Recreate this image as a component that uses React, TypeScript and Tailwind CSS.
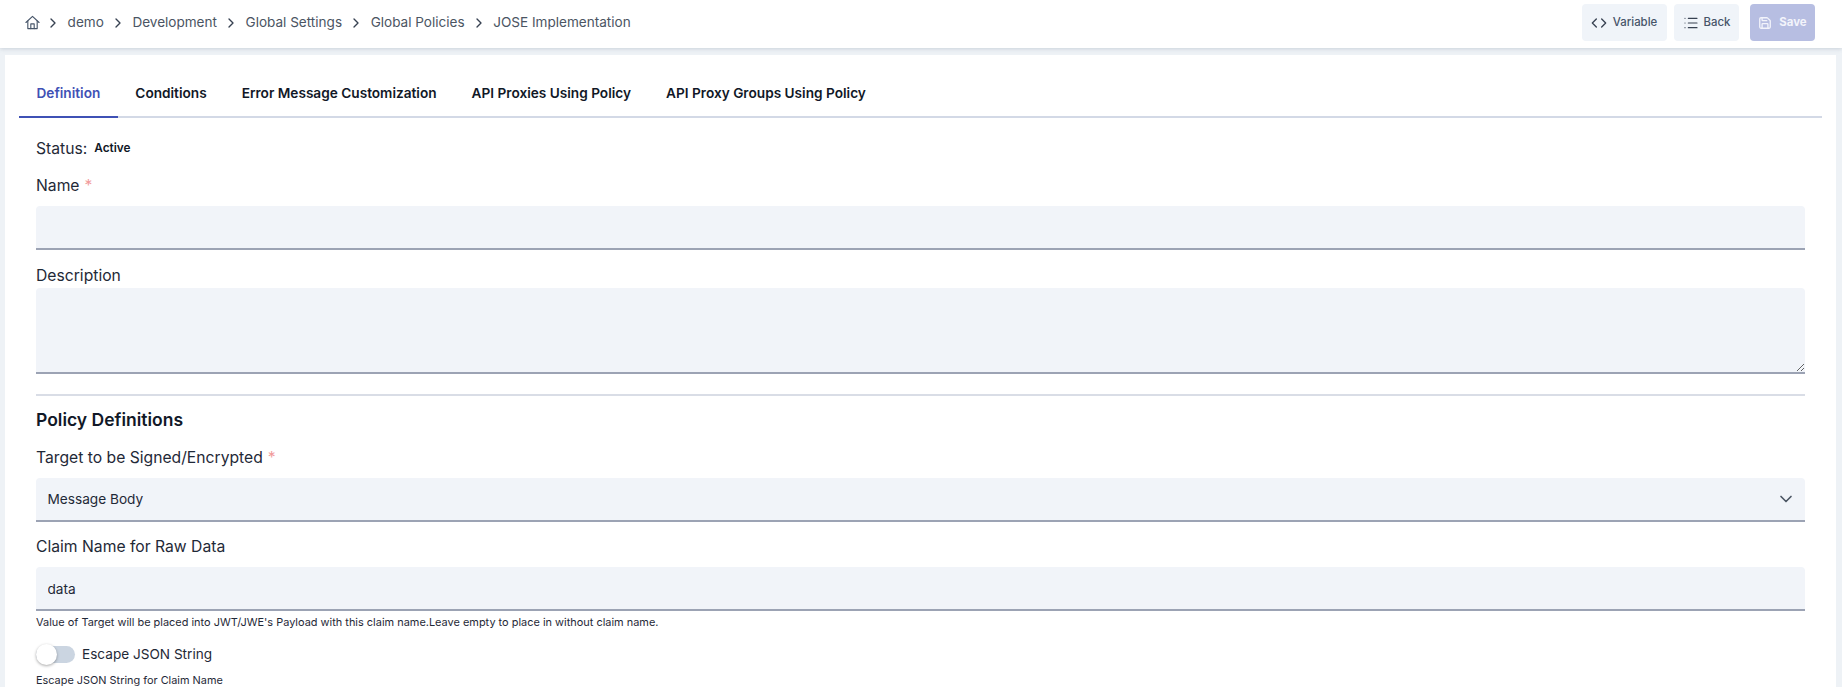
import { ChevronDown, ChevronRight, Code, List, Save } from "lucide-react";

const crumbs = ["demo", "Development", "Global Settings", "Global Policies", "JOSE Implementation"];
const tabs = ["Definition", "Conditions", "Error Message Customization", "API Proxies Using Policy", "API Proxy Groups Using Policy"];

function Label({ text, required, className }: { text: string; required?: boolean; className: string }) {
  return (
    <label className={`block text-[15.7px] leading-[24px] text-[#1f2937] ${className}`}>
      {text}
      {required && <span className="ml-[5px] text-[#f19a9a]">*</span>}
    </label>
  );
}

const fieldClass =
  "block w-full rounded-t-[4px] rounded-b-none bg-[#f1f4f9] border-b-2 border-[#9ca3b4] px-[11.5px] text-[13.65px] text-[#1f2937] outline-none appearance-none";

export default function App() {
  return (
    <div className="h-screen overflow-hidden bg-[#eef2f6] font-['Inter',sans-serif]">
      <header className="h-[48px] bg-white shadow-[0_1px_4px_rgba(100,116,139,0.25)] relative flex items-center justify-between pb-[3px] pl-[25px] pr-[27px]">
        <nav className="flex items-center text-[13.55px] text-[#4b5563]">
          <svg className="mr-[1px]" width="15" height="15" viewBox="0 0 16 16" fill="none" stroke="#475569" strokeWidth="1.2" strokeLinejoin="round" strokeLinecap="round">
            <path d="M1 8 L8 1.5 L15 8" />
            <path d="M3 6.5V14.5H13V6.5" />
            <path d="M6.2 14.5V9.5H9.8V14.5" />
          </svg>
          {crumbs.map((c) => (
            <span key={c} className="flex items-center">
              <ChevronRight size={16} strokeWidth={2} className="mx-[4.3px] text-[#374151]" />
              <span className="mx-[2px]">{c}</span>
            </span>
          ))}
        </nav>
        <div className="flex items-center text-[11.4px] font-medium">
          <button className="h-[37px] w-[85px] rounded-[4px] bg-[#f0f4f9] text-[#475569] flex items-center justify-center gap-[6px] pr-[1px]">
            <Code size={16} strokeWidth={2} className="text-[#374151]" />
            Variable
          </button>
          <button className="ml-[7px] h-[37px] w-[65px] rounded-[4px] bg-[#f0f4f9] text-[#475569] flex items-center justify-center gap-[5px]">
            <List size={16} strokeWidth={1.75} className="text-[#374151]" />
            Back
          </button>
          <button className="ml-[11px] h-[37px] w-[65px] rounded-[4px] bg-[#b7bee2] text-[#f3f4fb] font-bold flex items-center justify-center gap-[7px]">
            <Save size={14} strokeWidth={2.25} />
            Save
          </button>
        </div>
      </header>
      <main className="mt-[7px] ml-[5px] mr-[6px] h-[700px] bg-white px-[14px] pt-[18px]">
        <div className="flex h-[45px] border-b-2 border-[#d3d9e6]">
          {tabs.map((t, i) => (
            <div
              key={t}
              className={`h-[45px] px-[17.5px] pb-[2px] flex items-center border-b-2 text-[13.65px] font-semibold ${
                i === 0 ? "text-[#3f51b5] border-[#3f51b5]" : "text-[#111827] border-transparent"
              }`}
            >
              {t}
            </div>
          ))}
        </div>
        <div className="px-[17px] pr-[17px]">
          <div className="mt-[19px] flex items-center h-[24px]">
            <span className="text-[15.7px] text-[#1f2937]">Status:</span>
            <span className="ml-[7px] text-[11.8px] font-semibold text-[#111827]">Active</span>
          </div>
          <Label text="Name" required className="mt-[13px]" />
          <input className={`${fieldClass} h-[44px] mt-[8px]`} />
          <Label text="Description" className="mt-[14px]" />
          <textarea className="block w-full h-[86px] rounded-t-[4px] bg-[#f1f4f9] border-b-2 border-[#9ca3b4] px-3 py-2 text-[14px] outline-none" />
          <hr className="mt-[20px] border-t-2 border-[#d9dde6]" />
          <h2 className="mt-[11px] text-[17.5px] leading-[26px] font-semibold text-[#111827]">Policy Definitions</h2>
          <Label text="Target to be Signed/Encrypted" required className="mt-[13px]" />
          <div className="relative mt-[8px]">
            <select className={`${fieldClass} h-[44px]`} defaultValue="Message Body">
              <option>Message Body</option>
            </select>
            <ChevronDown size={20} strokeWidth={2} className="absolute right-[9px] top-[11px] text-[#4b5563]" />
          </div>
          <Label text="Claim Name for Raw Data" className="mt-[13px]" />
          <input className={`${fieldClass} h-[44px] mt-[8px] pt-[1px]`} defaultValue="data" />
          <p className="mt-[3px] text-[10.94px] leading-[16px] text-[#1f2937]">
            Value of Target will be placed into JWT/JWE's Payload with this claim name.Leave empty to place in without claim name.
          </p>
          <div className="mt-[12px] flex items-center h-[24px]">
            <div className="relative w-[39px] h-[17px] rounded-full bg-[#cbd5e1]">
              <div className="absolute left-0 top-[-2px] w-[21px] h-[21px] rounded-full bg-white shadow-[0_1px_3px_rgba(0,0,0,0.35)]" />
            </div>
            <span className="ml-[7px] text-[13.6px] text-[#1f2937]">Escape JSON String</span>
          </div>
          <p className="mt-[6px] text-[10.9px] leading-[16px] text-[#1f2937]">Escape JSON String for Claim Name</p>
        </div>
      </main>
    </div>
  );
}
